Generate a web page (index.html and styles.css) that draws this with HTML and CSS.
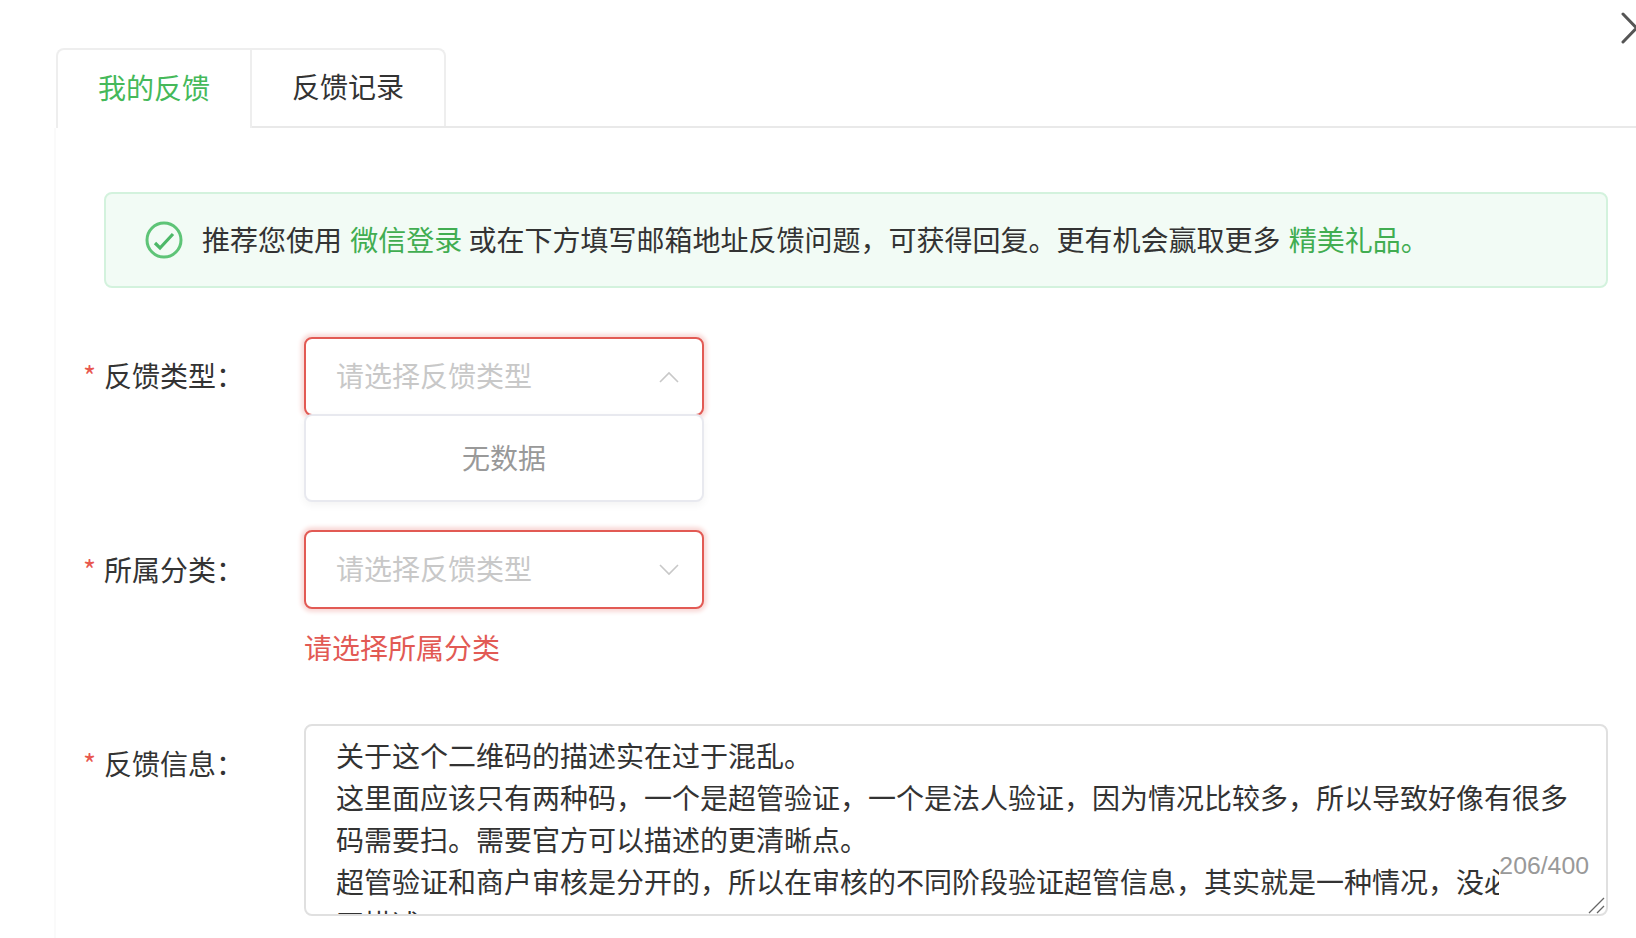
FILE: index.html
```html
<!DOCTYPE html>
<html lang="zh-CN">
<head>
    <meta charset="UTF-8">
    <meta name="viewport" content="width=device-width, initial-scale=1.0">
    <title>我的反馈</title>
    <link rel="stylesheet" href="styles.css">
</head>
<body>
    <svg class="close-icon" width="20" height="36" viewBox="0 0 20 36"><path d="M5 4 L18.5 18 L5 32" fill="none" stroke="#555" stroke-width="3" stroke-linecap="round"/></svg>

    <div class="tabs">
        <div class="tab active"><span>我的反馈</span></div>
        <div class="tab"><span>反馈记录</span></div>
    </div>

    <div class="panel">
        <div class="alert">
            <svg class="alert-icon" width="38" height="38" viewBox="0 0 38 38"><circle cx="19" cy="19" r="17" fill="none" stroke="#5ec477" stroke-width="3"/><path d="M10 22 L15 27 L28 13" fill="none" stroke="#4db868" stroke-width="3.2"/></svg>
            <span class="alert-text">推荐您使用 <a class="green">微信登录</a> 或在下方填写邮箱地址反馈问题，可获得回复。更有机会赢取更多 <a class="green">精美礼品。</a></span>
        </div>

        <div class="form-row first">
            <label class="form-label"><i>*</i>反馈类型：</label>
            <div class="field">
                <div class="select error">
                    <span>请选择反馈类型</span>
                    <svg width="20" height="12" viewBox="0 0 20 12"><path d="M1 11 L10 2 L19 11" fill="none" stroke="#c8c8c8" stroke-width="1.6"/></svg>
                </div>
                <div class="dropdown">无数据</div>
            </div>
        </div>

        <div class="form-row second">
            <label class="form-label"><i>*</i>所属分类：</label>
            <div class="field">
                <div class="select error">
                    <span>请选择反馈类型</span>
                    <svg width="20" height="12" viewBox="0 0 20 12"><path d="M1 1 L10 10 L19 1" fill="none" stroke="#c8c8c8" stroke-width="1.6"/></svg>
                </div>
                <div class="error-text">请选择所属分类</div>
            </div>
        </div>

        <div class="form-row third">
            <label class="form-label"><i>*</i>反馈信息：</label>
            <div class="field grow">
                <textarea class="message" readonly>关于这个二维码的描述实在过于混乱。
这里面应该只有两种码，一个是超管验证，一个是法人验证，因为情况比较多，所以导致好像有很多码需要扫。需要官方可以描述的更清晰点。
超管验证和商户审核是分开的，所以在审核的不同阶段验证超管信息，其实就是一种情况，没必要分开描述。</textarea>
                <span class="count">206/400</span>
                <svg class="resizer" width="18" height="18" viewBox="0 0 18 18"><path d="M1 17 L16 2 M9 17 L16 10" fill="none" stroke="#666" stroke-width="1.3"/></svg>
            </div>
        </div>
    </div>
</body>
</html>
```

FILE: styles.css
```css
* {
    margin: 0;
    padding: 0;
    box-sizing: border-box;
}

html, body {
    height: 100%;
    overflow: hidden;
}

body {
    font-family: "Noto Sans CJK SC", "Noto Sans", sans-serif;
    font-size: 28px;
    color: #333;
    background-color: #fff;
    padding: 48px 0 0 56px;
    position: relative;
}

.close-icon {
    position: absolute;
    top: 10px;
    right: -2px;
}

.tabs {
    display: flex;
    height: 80px;
    border-bottom: 2px solid #e9e9e9;
    margin-right: -10px;
}

.tab {
    width: 194px;
    display: flex;
    align-items: center;
    justify-content: center;
    border: 2px solid #eee;
    border-bottom: none;
    border-left: none;
    background-color: #fff;
    margin-bottom: -2px;
}

.tab span {
    padding-bottom: 4px;
}

.tab:first-child {
    width: 196px;
    border-left: 2px solid #eee;
    border-radius: 8px 0 0 0;
    position: relative;
}

.tab:nth-child(2) {
    border-radius: 0 8px 0 0;
    margin-bottom: 0;
}

.tab.active {
    color: #45b95a;
}

.panel {
    margin-left: -2px;
    padding: 64px 28px 0 48px;
    border-left: 2px solid #fafafa;
    height: 810px;
}

.alert {
    height: 96px;
    display: flex;
    align-items: center;
    padding-left: 39px;
    background-color: #f2fbf5;
    border: 2px solid #d3f2dd;
    border-radius: 8px;
}

.alert-icon {
    margin-right: 19px;
    flex-shrink: 0;
}

.alert-text {
    padding-bottom: 2px;
}

.green {
    color: #41ad51;
    margin-left: 2px;
}

.form-row {
    display: flex;
    margin-left: -21px;
}

.form-row.first {
    margin-top: 49px;
}

.form-row.second {
    margin-top: 28px;
}

.form-row.third {
    margin-top: 57px;
}

.form-label {
    width: 221px;
    flex-shrink: 0;
    line-height: 77px;
    white-space: nowrap;
}

.form-label i {
    display: inline-block;
    width: 21px;
    font-style: normal;
    color: #e8584f;
}

.second .form-label {
    line-height: 79px;
}

.third .form-label {
    line-height: 78px;
}

.field {
    position: relative;
    width: 400px;
}

.field.grow {
    width: auto;
    flex: 1;
    height: 192px;
}

.select {
    height: 79px;
    display: flex;
    align-items: center;
    justify-content: space-between;
    padding: 0 23px 0 30px;
    background-color: #fff;
    border-radius: 8px;
    color: #c8c8c8;
}

.select span {
    padding-bottom: 3px;
}

.select.error {
    border: 2px solid #e25a54;
    box-shadow: 0 0 4px 3px #f8d9d7;
}

.dropdown {
    height: 88px;
    margin-top: -2px;
    padding-bottom: 2px;
    display: flex;
    align-items: center;
    justify-content: center;
    position: relative;
    background-color: #fff;
    color: #999;
    border: 2px solid #e8e9ef;
    border-radius: 8px;
    box-shadow: 0 3px 8px rgba(0, 0, 0, 0.05);
}

.error-text {
    color: #e25a54;
    line-height: 40px;
    margin-top: 18px;
}

.message {
    display: block;
    width: 100%;
    height: 100%;
    padding: 8px 30px 0 30px;
    border: 2px solid #e0e0e0;
    border-radius: 8px;
    font: inherit;
    line-height: 42px;
    color: #333;
    resize: none;
    overflow: hidden;
    outline: none;
}

.count {
    position: absolute;
    right: 19px;
    top: 124px;
    padding-bottom: 15px;
    background-color: #fff;
    color: #999;
    font-family: "Liberation Sans", Arial, sans-serif;
    font-size: 24.8px;
    line-height: 36px;
}

.resizer {
    position: absolute;
    right: 2px;
    bottom: 2px;
}
```
